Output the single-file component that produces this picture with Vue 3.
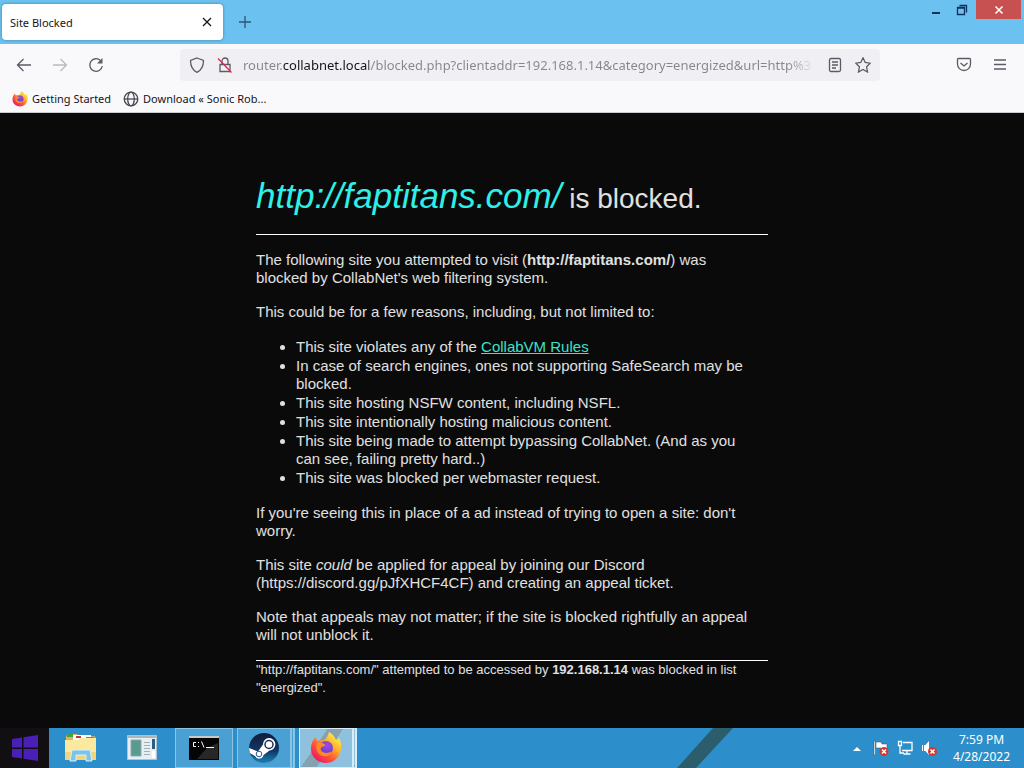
<script setup>
    import { ref } from 'vue'

    const url = ref('router.collabnet.local/blocked.php?clientaddr=192.168.1.14&category=energized&url=http%3')
    const blockedUrl = 'http://faptitans.com/'
    const clientAddr = '192.168.1.14'
    const category = 'energized'
</script>

<template>
    <div class="window">
        <!-- 分頁列 -->
        <header class="titlebar">
            <div class="tab">
                <span class="tab_title">Site Blocked</span>
                <button type="button" class="icon_btn tab_close" aria-label="Close tab">
                    <svg width="10" height="10" viewBox="0 0 10 10"><path d="M1 1l8 8M9 1l-8 8" /></svg>
                </button>
            </div>
            <button type="button" class="icon_btn new_tab" aria-label="New tab">
                <svg width="12" height="12" viewBox="0 0 12 12"><path d="M6 0v12M0 6h12" /></svg>
            </button>
            <div class="controls">
                <button type="button" class="control" aria-label="Minimize">
                    <svg width="12" height="12" viewBox="0 0 12 12"><path d="M2 9h8" stroke-width="2" /></svg>
                </button>
                <button type="button" class="control" aria-label="Restore">
                    <svg width="12" height="12" viewBox="0 0 12 12">
                        <path d="M1.5 3.5h7v7h-7zM1 4h8M3.500 1.500h7v7" />
                    </svg>
                </button>
                <button type="button" class="control control_close" aria-label="Close">
                    <svg width="10" height="10" viewBox="0 0 10 10"><path d="M1.500 1.500l7 7M8.500 1.500l-7 7" stroke-width="1.600" /></svg>
                </button>
            </div>
        </header>

        <!-- 網址列 -->
        <nav class="toolbar" aria-label="Navigation">
            <div class="nav_btns">
                <button type="button" class="icon_btn" aria-label="Back">
                    <svg width="16" height="16" viewBox="0 0 16 16"><path d="M15 8H1.500M7.500 2l-6 6 6 6" /></svg>
                </button>
                <button type="button" class="icon_btn disabled" aria-label="Forward" disabled>
                    <svg width="16" height="16" viewBox="0 0 16 16"><path d="M1 8h13.500M8.500 2l6 6-6 6" /></svg>
                </button>
                <button type="button" class="icon_btn" aria-label="Reload">
                    <svg width="16" height="16" viewBox="0 0 16 16">
                        <path d="M12.500 3.500A6.300 6.300 0 1 0 14.300 9" />
                        <path d="M14.500 1v5.500H9z" fill="currentColor" stroke="none" />
                    </svg>
                </button>
            </div>
            <div class="urlbar">
                <button type="button" class="icon_btn" aria-label="Tracking protection">
                    <svg width="16" height="16" viewBox="0 0 16 16">
                        <path d="M8 1L14.500 3.500C14.500 9 13 13 8 15.300C3 13 1.500 9 1.500 3.500Z" />
                    </svg>
                </button>
                <button type="button" class="icon_btn" aria-label="Connection not secure">
                    <svg width="16" height="16" viewBox="0 0 16 16">
                        <path d="M3 7.500h10v7H3zM5 7V4a3 3 0 0 1 6 0v3" />
                        <path d="M1 1.500l13.500 14" stroke="#e22850" />
                    </svg>
                </button>
                <input v-model="url" class="url_input" type="text" aria-label="Address" spellcheck="false">
                <button type="button" class="icon_btn" aria-label="Reader view">
                    <svg width="16" height="16" viewBox="0 0 16 16">
                        <rect x="2.500" y="1.500" width="11" height="13" rx="1.500" />
                        <path d="M5 5h6M5 8h6M5 11h4" />
                    </svg>
                </button>
                <button type="button" class="icon_btn" aria-label="Bookmark this page">
                    <svg width="16" height="16" viewBox="0 0 16 16">
                        <path d="M8 .8l2.200 4.700 5 .7-3.600 3.600.9 5.200L8 12.500 3.500 15l.9-5.200L.8 6.200l5-.7z" />
                    </svg>
                </button>
            </div>
            <div class="menu_btns">
                <button type="button" class="icon_btn" aria-label="Save to Pocket">
                    <svg width="16" height="16" viewBox="0 0 16 16">
                        <path d="M2.500 1.500h11a1 1 0 0 1 1 1V7a6.500 6.500 0 0 1-13 0V2.500a1 1 0 0 1 1-1zM4.500 6L8 9l3.500-3" />
                    </svg>
                </button>
                <button type="button" class="icon_btn" aria-label="Open menu">
                    <svg width="16" height="16" viewBox="0 0 16 16"><path d="M2 3h12M2 7.500h12M2 12h12" /></svg>
                </button>
            </div>
        </nav>

        <div class="bookmarks">
            <a href="#">
                <svg width="16" height="16" viewBox="0 0 32 32"><use href="#firefox" /></svg>
                Getting Started
            </a>
            <a href="#">
                <svg class="globe" width="16" height="16" viewBox="0 0 16 16">
                    <circle cx="8" cy="8" r="6.800" />
                    <ellipse cx="8" cy="8" rx="3.300" ry="6.800" />
                    <path d="M1 8h14" />
                </svg>
                Download « Sonic Rob...
            </a>
        </div>

        <!-- 封鎖頁內容 -->
        <main class="page">
            <article>
                <h1><em>{{ blockedUrl }}</em> is blocked.</h1>
                <hr>
                <p>
                    The following site you attempted to visit (<b>{{ blockedUrl }}</b>) was
                    blocked by CollabNet's web filtering system.
                </p>
                <p>This could be for a few reasons, including, but not limited to:</p>
                <ul>
                    <li>This site violates any of the <a href="#">CollabVM Rules</a></li>
                    <li>In case of search engines, ones not supporting SafeSearch may be blocked.</li>
                    <li>This site hosting NSFW content, including NSFL.</li>
                    <li>This site intentionally hosting malicious content.</li>
                    <li>This site being made to attempt bypassing CollabNet. (And as you can see, failing pretty hard..)</li>
                    <li>This site was blocked per webmaster request.</li>
                </ul>
                <p>If you're seeing this in place of a ad instead of trying to open a site: don't worry.</p>
                <p>
                    This site <i>could</i> be applied for appeal by joining our Discord
                    (https://discord.gg/pJfXHCF4CF) and creating an appeal ticket.
                </p>
                <p>Note that appeals may not matter; if the site is blocked rightfully an appeal will not unblock it.</p>
                <hr>
                <footer>
                    "{{ blockedUrl }}" attempted to be accessed by <b>{{ clientAddr }}</b> was blocked in list "{{ category }}".
                </footer>
            </article>
        </main>

        <!-- 工作列 -->
        <footer class="taskbar">
            <button type="button" class="start" aria-label="Start">
                <svg width="28" height="26" viewBox="0 0 28 26">
                    <path fill="#4a1fb8" d="M1 4l10-1.500v10H1zM12.500 2.300L27 0v12.500H12.500zM1 14h10v9.500L1 22zM12.500 14H27v12l-14.500-2.200z" />
                </svg>
            </button>
            <button type="button" class="task" aria-label="File Explorer">
                <svg width="34" height="30" viewBox="0 0 34 30">
                    <path fill="#d9b45c" d="M2 3l2-2h9l2 2h15l2 2v22H2z" />
                    <path fill="#43a047" d="M3 1h6v3H3z" />
                    <path fill="#fff" d="M9 2h18v5H9z" />
                    <path fill="#c0392b" d="M12 3h5v2h-5z" />
                    <path fill="#3f8fd0" d="M22 4h8v2h-8z" />
                    <path fill="#fbe9a0" d="M1 7h13l3-2h15v22H1z" />
                    <path fill="#f1d57d" d="M1 19h31v8H1z" />
                    <path fill="#7cc3e8" stroke="#d8f1fb" d="M6 28l2-11h18l2 11h-6v-6H12v6z" />
                </svg>
            </button>
            <button type="button" class="task" aria-label="Program Manager">
                <svg width="30" height="26" viewBox="0 0 30 26">
                    <path fill="#e9eef0" stroke="#b4c3cb" d="M.5.5h29v24H.5z" />
                    <path fill="#a9b7bd" d="M1 1h28v2H1z" />
                    <path fill="#5a9a8c" stroke="#86a7b8" d="M4 5h10v16H4z" />
                    <path stroke="#9fb0b8" d="M17 7.500h6M17 10.500h6M17 13.500h6M17 16.500h6M17 19.500h6" />
                    <path fill="#2c5c80" d="M25 4h3v10h-3z" />
                    <path fill="#fff" d="M25 16h3v7h-3z" />
                </svg>
            </button>
            <button type="button" class="task open" aria-label="Command Prompt">
                <svg width="30" height="24" viewBox="0 0 30 24">
                    <path fill="#050505" d="M0 0h30v24H0z" />
                    <path fill="#c9c9c9" d="M0 0h30v2H0z" />
                    <path fill="#272727" d="M18 12l11-5v16H8z" />
                    <path fill="none" stroke="#fff" d="M7 6.500H4.500v4H7M9.500 6v1M9.500 10v1M12.500 5.500l2.500 6M17 11.500h8" />
                </svg>
            </button>
            <button type="button" class="task open stacked" aria-label="Steam">
                <svg width="30" height="30" viewBox="0 0 30 30">
                    <defs>
                        <linearGradient id="steam" x1="0" y1="0" x2="0" y2="1">
                            <stop offset="0" stop-color="#111b3c" />
                            <stop offset=".6" stop-color="#123765" />
                            <stop offset="1" stop-color="#1884b5" />
                        </linearGradient>
                    </defs>
                    <circle cx="15" cy="15" r="15" fill="url(#steam)" />
                    <path fill="#fff" d="M0 15l9 3.500 5-7a6.200 6.200 0 1 1 6.500 6l-6 4.500A4.500 4.500 0 0 1 6 23L.8 20z" />
                    <circle cx="20" cy="11.500" r="4" fill="#fff" stroke="#16305b" stroke-width="1.500" />
                    <circle cx="10" cy="21" r="2.800" fill="none" stroke="#28588a" />
                </svg>
            </button>
            <button type="button" class="task open stacked active" aria-label="Firefox">
                <svg width="32" height="32" viewBox="0 0 32 32">
                    <defs>
                        <linearGradient id="flame" x1=".85" y1=".1" x2=".2" y2=".9">
                            <stop offset="0" stop-color="#fff04a" />
                            <stop offset=".35" stop-color="#ffb02a" />
                            <stop offset=".65" stop-color="#ff5a36" />
                            <stop offset="1" stop-color="#ee1c62" />
                        </linearGradient>
                        <radialGradient id="globe" cx=".6" cy=".3" r=".8">
                            <stop offset="0" stop-color="#a04be0" />
                            <stop offset="1" stop-color="#5a3ccc" />
                        </radialGradient>
                        <g id="firefox" stroke="none">
                            <path fill="url(#flame)" d="M19 0c5 3 6 6 7 8 2 0 3-1 2.500-3C31 9 31.500 13 31 17c-1 8-7 14-15 14S1 25 1 17C1 12 3 7 6 5c0 2 1 3 2 4 2-1 4-1 6-.5C16 7 18 4 19 0z" />
                            <circle cx="16" cy="16" r="7" fill="url(#globe)" />
                            <path fill="#ff8a24" d="M7 11c3-1 6 0 8 1.500 1 .8 0 1.500-2 2-2 .5-3 2-2 4 2 3 7 3 11 1-2 4-5 5.500-9 4.500-5-1-8-7-6-13z" />
                        </g>
                    </defs>
                    <use href="#firefox" />
                </svg>
            </button>
            <span class="spacer"></span>
            <svg class="stripe" width="56" height="40" viewBox="0 0 56 40"><path fill="#2c5d6d" d="M36 0h20L19 40H0z" /></svg>
            <div class="tray">
                <button type="button" class="tray_btn" aria-label="Show hidden icons">
                    <svg width="8" height="16" viewBox="0 0 8 16"><path fill="#fff" d="M0 11l4-4 4 4z" /></svg>
                </button>
                <button type="button" class="tray_btn" aria-label="Action Center">
                    <svg width="16" height="16" viewBox="0 0 16 16">
                        <path fill="#fff" stroke="#1c4d74" stroke-width=".5" d="M1 1h1.500v14H1zM3 2h5l1 2h5v6H9L8 8H3z" />
                        <circle cx="11" cy="11.500" r="4.500" fill="#d5392b" />
                        <path stroke="#fff" stroke-width="1.500" d="M9 9.500l4 4M13 9.500l-4 4" />
                    </svg>
                </button>
                <button type="button" class="tray_btn" aria-label="Network">
                    <svg width="16" height="16" viewBox="0 0 16 16">
                        <path fill="none" stroke="#fff" stroke-width="1.300" d="M6 2.500h9v8H5M10 11v3M6.500 14h7M1.500 1.500h3v4h-3zM3 6v7h4" />
                    </svg>
                </button>
                <button type="button" class="tray_btn" aria-label="Volume muted">
                    <svg width="16" height="16" viewBox="0 0 16 16">
                        <path fill="#fff" d="M1 5h1v6H1zM3 5h1.500L8 1v14l-3.500-4H3z" />
                        <circle cx="11.500" cy="11.500" r="4.500" fill="#d5392b" />
                        <path stroke="#fff" stroke-width="1.500" d="M9.500 9.500l4 4M13.500 9.500l-4 4" />
                    </svg>
                </button>
                <time class="clock" datetime="2022-04-28T19:59">
                    <span>7:59 PM</span>
                    <span>4/28/2022</span>
                </time>
            </div>
        </footer>
    </div>
</template>

<style>
    body {
        margin: 0;
        background-color: #0a0a0a;
    }
</style>

<style scoped>
    .window {
        display: flex;
        flex-direction: column;
        min-height: 100vh;
        font-family: "Noto Sans", "Open Sans", sans-serif;
        font-size: 11px;
        color: #15141a;
    }

    button {
        border: 0;
        padding: 0;
        background: none;
        color: inherit;
        font: inherit;
    }

    svg {
        display: block;
        flex: none;
    }

    /* 分頁列 */
    .titlebar {
        display: flex;
        height: 44px;
        background-color: #6bc1ef;
    }

    .tab {
        display: flex;
        align-items: center;
        justify-content: space-between;
        box-sizing: border-box;
        width: 221px;
        height: 36px;
        margin: 4px 0 0 2px;
        padding: 0 8px;
        border-radius: 4px;
        background-color: #fff;
        box-shadow: 0 0 3px rgba(0, 0, 0, 0.35);
    }

    .icon_btn {
        display: flex;
        align-items: center;
        justify-content: center;
        width: 16px;
        height: 16px;
        color: #5b5b66;
    }

    .icon_btn svg,
    .control svg,
    .bookmarks svg {
        fill: none;
        stroke: currentColor;
        stroke-width: 1.3;
    }

    .tab_close {
        color: #15141a;
    }

    .new_tab {
        margin: 14px 0 0 14px;
        color: #2c5674;
    }

    .controls {
        display: flex;
        height: 19px;
        margin: 0 3px 0 auto;
    }

    .control {
        display: flex;
        align-items: center;
        justify-content: center;
        width: 26px;
        color: #10315c;
    }

    .control_close {
        width: 45px;
        margin-left: 1px;
        background-color: #c75050;
        color: #fff;
    }

    /* 網址列 */
    .toolbar {
        display: flex;
        align-items: center;
        height: 41px;
        padding: 0 16px;
        background-color: #f9f9fb;
    }

    .nav_btns {
        display: flex;
        gap: 20px;
        width: 164px;
    }

    .disabled {
        opacity: 0.4;
    }

    .urlbar {
        display: flex;
        flex: 1;
        align-items: center;
        gap: 12px;
        box-sizing: border-box;
        height: 32px;
        padding: 0 9px;
        border-radius: 4px;
        background-color: #f0f0f4;
    }

    /* 網域深色，其餘淺色，右側淡出 */
    .url_input {
        flex: 1;
        min-width: 0;
        margin: 0 -4px 0 -2px;
        padding: 0;
        border: 0;
        outline: 0;
        background-image: linear-gradient(to right, #85858c 40px, #15141a 40px, #15141a 126px, #85858c 126px, #85858c calc(100% - 32px), transparent);
        background-clip: text;
        color: transparent;
        caret-color: #15141a;
        font-family: inherit;
        font-size: 13px;
        line-height: 20px;
    }

    .menu_btns {
        display: flex;
        justify-content: flex-end;
        gap: 20px;
        width: 128px;
    }

    .bookmarks {
        display: flex;
        align-items: center;
        gap: 12px;
        height: 27px;
        padding: 0 12px;
        border-bottom: 1px solid #ccccd2;
        background-color: #f9f9fb;
    }

    .bookmarks a {
        display: flex;
        align-items: center;
        gap: 4px;
        color: #15141a;
        text-decoration: none;
    }

    .bookmarks .globe {
        stroke: #4a4a55;
    }

    /* 封鎖頁內容 */
    .page {
        flex: 1;
        background-color: #0a0a0a;
        color: #e0e0e0;
        font-family: "Liberation Sans", Arial, sans-serif;
        font-size: 15px;
        line-height: 18px;
    }

    article {
        width: 50%;
        margin: 0 auto;
        padding: 63px 0 30px;
    }

    h1 {
        margin: 0 0 16px;
        font-size: 28px;
        font-weight: normal;
        line-height: 39px;
    }

    h1 em {
        color: #2ef0e6;
        font-size: 35px;
    }

    hr {
        height: 1px;
        margin: 0;
        border: 0;
        background-color: #fff;
    }

    p {
        margin: 16px 0;
        padding-right: 12px;
    }

    ul {
        margin: 16px 0;
        padding: 1px 12px 1px 40px;
    }

    li {
        margin-top: 1px;
    }

    li:first-child {
        margin-top: 0;
    }

    li a {
        color: #3fe0c8;
    }

    article footer {
        font-size: 13px;
    }

    /* 工作列 */
    .taskbar {
        display: flex;
        height: 40px;
        background-color: #2c8fcb;
    }

    .start {
        display: flex;
        align-items: center;
        justify-content: center;
        width: 49px;
        background-color: #120f12;
    }

    .task {
        display: flex;
        align-items: center;
        justify-content: center;
        box-sizing: border-box;
        width: 58px;
        margin-left: 3px;
    }

    .task.open {
        margin-left: 4px;
        border: 1px solid #8cc4e6;
        background-color: #4a9fd3;
    }

    .task.stacked {
        border-right: 5px double #8cc4e6;
    }

    .task.active {
        border-color: #d9edf8;
        background-image: linear-gradient(125deg, #8fc0dd 35%, #86a2b0 35%, #86a2b0 55%, #8fc0dd 55%);
    }

    .spacer {
        flex: 1;
    }

    .tray {
        display: flex;
        align-items: center;
        gap: 8px;
        margin-left: 120px;
        padding-right: 14px;
        color: #fff;
    }

    .tray_btn:first-child {
        margin-right: 4px;
    }

    .clock {
        display: flex;
        flex-direction: column;
        align-items: center;
        margin-left: 8px;
        font-size: 12px;
        line-height: 17px;
    }
</style>
